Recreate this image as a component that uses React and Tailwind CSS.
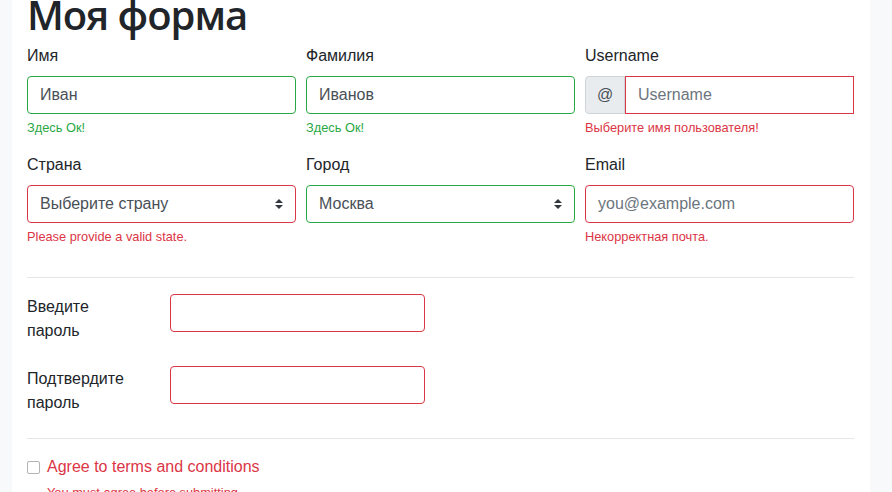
// Bootstrap-style validation form, rebuilt with Tailwind utility classes.
const FONT = "font-['Liberation_Sans',Arial,sans-serif]";

// Small up/down arrows used by the custom select.
const SelectArrows = () => (
	<svg width="8" height="10" viewBox="0 0 4 5" className="absolute right-[12px] top-1/2 -translate-y-1/2">
		<path d="M2 0L0 2h4zm0 5L0 3h4z" fill="#343a40" />
	</svg>
);

const Feedback = ({ ok, children }) => (
	<div className={`mt-1 text-[12.8px] leading-[19.2px] ${ok ? "text-[#28a745]" : "text-[#dc3545]"}`}>{children}</div>
);

const App = () => {
	return (
		<div className={`min-h-screen bg-[#f8f9fa] ${FONT} text-[#212529] text-base leading-6`}>
			<div className="ml-[12px] w-[858px] min-h-screen bg-white pl-[15px] pr-[16px] overflow-hidden">
				{/* Title, partly scrolled above the viewport */}
				<h1 className="-mt-[9px] mb-[5px] text-[40px] leading-[48px] font-semibold tracking-[-1px] font-['Open_Sans',sans-serif]">Моя форма</h1>

				{/* First row: name, surname, username */}
				<div className="grid grid-cols-3 gap-x-[10px]">
					<div className="mb-4">
						<label className="block mb-2">Имя</label>
						<div className="h-[38px] border border-[#28a745] rounded px-3 flex items-center text-[#495057]">Иван</div>
						<Feedback ok>Здесь Ок!</Feedback>
					</div>
					<div className="mb-4">
						<label className="block mb-2">Фамилия</label>
						<div className="h-[38px] border border-[#28a745] rounded px-3 flex items-center text-[#495057]">Иванов</div>
						<Feedback ok>Здесь Ок!</Feedback>
					</div>
					<div className="mb-4">
						<label className="block mb-2">Username</label>
						<div className="flex h-[38px]">
							<span className="w-[40px] flex items-center justify-center bg-[#e9ecef] border border-[#ced4da] rounded-l text-[#495057]">@</span>
							<div className="flex-1 border border-[#dc3545] px-3 flex items-center text-[#6c757d]">Username</div>
						</div>
						<Feedback>Выберите имя пользователя!</Feedback>
					</div>

					{/* Second row: country, city, email */}
					<div className="mb-4">
						<label className="block mb-2">Страна</label>
						<div className="relative h-[38px] border border-[#dc3545] rounded pl-3 pr-7 flex items-center text-[#495057]">
							Выберите страну
							<SelectArrows />
						</div>
						<Feedback>Please provide a valid state.</Feedback>
					</div>
					<div className="mb-4">
						<label className="block mb-2">Город</label>
						<div className="relative h-[38px] border border-[#28a745] rounded pl-3 pr-7 flex items-center text-[#495057]">
							Москва
							<SelectArrows />
						</div>
					</div>
					<div className="mb-4">
						<label className="block mb-2">Email</label>
						<div className="h-[38px] border border-[#dc3545] rounded px-3 flex items-center text-[#6c757d]">you@example.com</div>
						<Feedback>Некорректная почта.</Feedback>
					</div>
				</div>

				<hr className="mt-[15px] mb-4 border-t border-[#e6e6e6]" />

				{/* Password rows */}
				<div className="flex mb-4">
					<label className="w-[143px] mb-[7px] pr-[38px] pt-px">Введите пароль</label>
					<div className="w-[255px] h-[38px] border border-[#dc3545] rounded"></div>
				</div>
				<div className="flex mb-4">
					<label className="w-[143px] mb-[7px] pr-[38px] pt-px">Подтвердите пароль</label>
					<div className="w-[255px] h-[38px] border border-[#dc3545] rounded"></div>
				</div>

				<hr className="mb-4 border-t border-[#e6e6e6]" />

				{/* Terms checkbox */}
				<div className="pl-5 relative">
					<span className="absolute left-0 top-[6px] w-[13px] h-[13px] border border-[#b3b3b3] rounded-[2px] bg-white"></span>
					<label className="block text-[#dc3545]">Agree to terms and conditions</label>
					<Feedback>You must agree before submitting.</Feedback>
				</div>
			</div>
		</div>
	);
};

export default App;
